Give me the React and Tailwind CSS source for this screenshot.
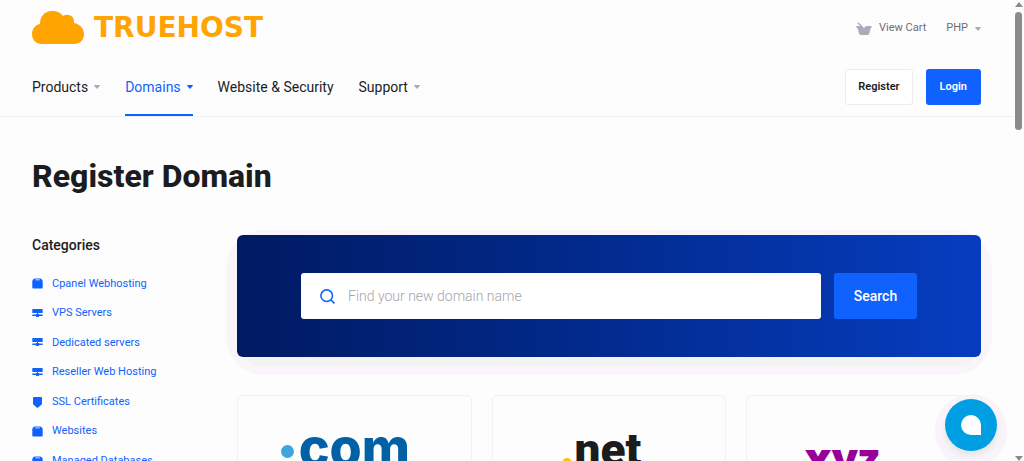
import React from "react";

const NAV_ITEMS = [
  { label: "Products", menu: true },
  { label: "Domains", menu: true, active: true },
  { label: "Website & Security" },
  { label: "Support", menu: true },
];

const CATEGORIES = [
  { label: "Cpanel Webhosting", icon: "box" },
  { label: "VPS Servers", icon: "server" },
  { label: "Dedicated servers", icon: "server" },
  { label: "Reseller Web Hosting", icon: "server" },
  { label: "SSL Certificates", icon: "shield" },
  { label: "Websites", icon: "box" },
  { label: "Managed Databases", icon: "box" },
];

const Caret = ({ className }) => (
  <svg viewBox="0 0 6 4" className={`h-1 w-1.5 fill-current ${className}`}>
    <path d="M0 .6Q0 0 .6 0h4.8Q6 0 6 .6L3.5 3.6Q3 4.1 2.5 3.6Z" />
  </svg>
);

const CategoryIcon = ({ type }) => (
  <svg viewBox="0 0 11 11" className="h-[11px] w-[11px] shrink-0 fill-current">
    {type === "box" && (
      <path
        fillRule="evenodd"
        d="M2.600.5h5.800L10 1.400l.7 1.600v6.500q0 1-1 1H1.300q-1 0-1-1V3L1 1.400ZM3.200 1.500v.8h4.600v-.8Z"
      />
    )}
    {type === "server" && (
      <path d="M.8 1h9.400q.5 0 .5.5v3q0 .5-.5.5H6v1h.8l.6.5h3.300v1.500H7.400L6.600 9H4.400l-.8-1H.3V6.500h3.300l.6-.5H5V5H.8q-.5 0-.5-.5v-3Q.3 1 .8 1Z" />
    )}
    {type === "shield" && (
      <path d="M2 0h7q1 0 1 1v5.400q0 1-.9 1.600L6.200 10.400q-.7.5-1.400 0L1.900 8Q1 7.400 1 6.400V1q0-1 1-1Z" />
    )}
  </svg>
);

const Header = () => (
  <header className="border-b border-[#f0f0f2] px-8">
    <div className="flex items-center justify-between pt-[11px]">
      <a href="#" className="flex items-center gap-2.5 text-[#ffa400]">
        <svg viewBox="0 0 52 33" className="h-[33px] w-[52px] fill-current">
          <path d="M10 33C4 33 0 29 0 23c0-5 3-9 8-10C8 5 13 0 20 0c5 0 9 2 11 5 5-3 12 0 11 7 6 1 10 6 10 11 0 6-4 10-10 10Z" />
        </svg>
        <span className="font-['DejaVu_Sans',sans-serif] text-[28px] leading-8 font-bold">
          TRUEHOST
        </span>
      </a>
      <div className="flex items-center gap-5 pt-0.5 text-[11px] text-[#6b6d76]">
        <a href="#" className="flex items-center gap-[7px]">
          <svg viewBox="0 0 16 14" className="h-3.5 w-4 fill-[#a9acb8]">
            <path d="M1.800.8Q2.500.2 3.200.9L6.300 4 8 6 10 4h4.500q1.200 0 1.200 1 0 .9-1 1L13.300 11.600q-.4 1.400-1.700 1.400H5Q3.500 13 3 11.600L1.500 6Q.3 5.800.3 5 .3 4.100 1 4h3.500L1.900 2Q1.200 1.400 1.800.8Z" />
          </svg>
          View Cart
        </a>
        <button type="button" className="flex items-center gap-[7px]">
          PHP
          <Caret className="text-[#a9acb8]" />
        </button>
      </div>
    </div>
    <div className="mt-3.5 flex items-center justify-between">
      <nav className="flex gap-[25px] text-sm">
        {NAV_ITEMS.map((item) => (
          <a
            key={item.label}
            href="#"
            className={`flex h-[58px] items-center gap-1.5 border-b-2 pt-0.5 ${
              item.active
                ? "border-[#1062fe] text-[#1062fe]"
                : "border-transparent text-[#1b1c1f]"
            }`}
          >
            {item.label}
            {item.menu && (
              <Caret className={item.active ? "" : "text-[#a9acb8]"} />
            )}
          </a>
        ))}
      </nav>
      <div className="flex gap-[13px] text-[11px] font-semibold">
        <button
          type="button"
          className="h-9 rounded-[3px] border border-[#ececee] bg-white px-3 text-[#1b1c1f]"
        >
          Register
        </button>
        <button
          type="button"
          className="h-9 rounded-[3px] bg-[#1062fe] px-3.5 text-white"
        >
          Login
        </button>
      </div>
    </div>
  </header>
);

const Sidebar = () => (
  <aside className="w-[205px] shrink-0">
    <h2 className="text-sm leading-5 font-medium">Categories</h2>
    <ul className="mt-3.5 grid h-[207px] grid-rows-7 text-[11px] text-[#1062fe]">
      {CATEGORIES.map((category) => (
        <li key={category.label} className="flex items-center">
          <a href="#" className="flex items-center gap-[9px]">
            <CategoryIcon type={category.icon} />
            {category.label}
          </a>
        </li>
      ))}
    </ul>
  </aside>
);

const DomainSearch = () => (
  <div className="relative">
    {/* Soft glow under the panel */}
    <span className="absolute -top-[5px] -right-[11px] -bottom-[18px] -left-[11px] rounded-[38px] bg-[#f9f5fa]" />
    <span className="absolute inset-x-0.5 top-5 -bottom-2.5 rounded-[24px] bg-[#f3f3f3]" />
    <form
      onSubmit={(e) => e.preventDefault()}
      className="relative flex gap-[13px] rounded-md bg-linear-to-r from-[#001a62] to-[#063dc0] px-16 py-[38px]"
    >
      <label className="flex h-[46px] flex-1 items-center gap-[13px] rounded-[3px] bg-white px-[19px]">
        <svg
          viewBox="0 0 15 15"
          className="h-[15px] w-[15px] shrink-0 fill-none stroke-[#1062fe]"
          strokeWidth="1.6"
        >
          <circle cx="6.700" cy="6.700" r="5.800" />
          <path d="m10.800 10.800 3.700 3.700" />
        </svg>
        <input
          type="text"
          aria-label="Domain name"
          placeholder="Find your new domain name"
          className="w-full text-sm font-light outline-none placeholder:text-[#a3a5a9]"
        />
      </label>
      <button
        type="submit"
        className="h-[46px] w-[83px] rounded-[3px] bg-[#1062fe] text-sm font-medium text-white"
      >
        Search
      </button>
    </form>
  </div>
);

const TldCard = ({ children }) => (
  <a
    href="#"
    className="flex h-40 justify-center rounded-[5px] border border-[#f1f1f3] pt-[22px]"
  >
    {children}
  </a>
);

const ChatButton = () => (
  <div className="fixed right-[17px] bottom-[-7px] rounded-full bg-[#f8f4f9] px-2.5 pt-[5px] pb-[17px]">
    <button
      type="button"
      aria-label="Open chat"
      className="flex h-[52px] w-[52px] items-center justify-center rounded-full bg-[#009ee3] shadow-[0_5px_5px_#e6e6e8]"
    >
      <span className="h-5 w-5 rounded-full rounded-br-none bg-white" />
    </button>
  </div>
);

const Scrollbar = () => (
  <div className="flex w-[11px] shrink-0 flex-col items-center justify-between text-[#8b8b8b]">
    <div className="flex flex-col items-center gap-[5px] pt-0.5">
      <svg viewBox="0 0 8 5" className="h-[5px] w-2 fill-current">
        <path d="M4 0 8 5H0Z" />
      </svg>
      <div className="h-[118px] w-[7px] rounded-full bg-current" />
    </div>
    <svg viewBox="0 0 8 5" className="h-[5px] w-2 fill-current">
      <path d="M0 0h8L4 5Z" />
    </svg>
  </div>
);

const App = () => {
  return (
    <div className="flex h-screen overflow-hidden bg-[#fdfdfd] font-[Roboto,sans-serif] text-[#1b1c1f]">
      <div className="min-w-0 flex-1 overflow-hidden">
        <Header />
        <main className="px-8 pt-[39px]">
          <h1 className="text-[32px] leading-10 font-extrabold">
            Register Domain
          </h1>
          <div className="mt-[39px] flex">
            <Sidebar />
            <section className="min-w-0 flex-1">
              <DomainSearch />
              <div className="mt-[38px] grid grid-cols-3 gap-5">
                <TldCard>
                  <span className="flex gap-[5px] pr-[18px] font-[Inter,sans-serif] text-[52px] leading-[60px] font-extrabold text-[#0062a5]">
                    <span className="mt-[27px] h-[13px] w-[13px] rounded-full bg-[#3ea5de]" />
                    com
                  </span>
                </TldCard>
                <TldCard>
                  <span className="flex gap-[3px] pr-[15px] text-[46px] leading-[64px] font-black text-[#1c1c1c]">
                    <span className="mt-10 h-[10px] w-[10px] rounded-full bg-[#ffc20e]" />
                    net
                  </span>
                </TldCard>
                <TldCard>
                  <span className="pr-[43px] font-['Open_Sans',sans-serif] text-[43px] leading-[80px] font-extrabold text-[#990099]">
                    xyz
                  </span>
                </TldCard>
              </div>
            </section>
          </div>
        </main>
      </div>
      <Scrollbar />
      <ChatButton />
    </div>
  );
};

export default App;
